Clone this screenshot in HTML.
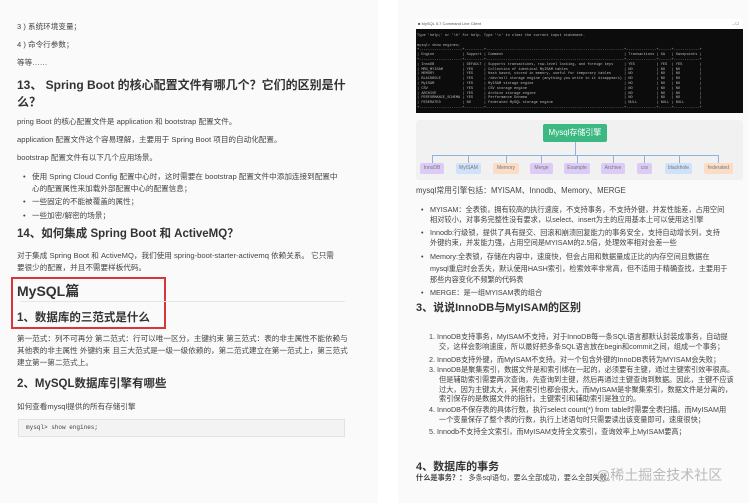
<!DOCTYPE html>
<html><head><meta charset="utf-8"><style>
*{margin:0;padding:0;box-sizing:border-box}
body{width:749px;height:503px;overflow:hidden;background:#fff;font-family:"Liberation Sans","Noto Sans CJK SC",sans-serif;color:#333;position:relative}
.l{position:absolute;font-size:7.6px;white-space:nowrap;line-height:10px;color:#444}
.r{font-size:7.2px}
.h{position:absolute;font-weight:bold;white-space:nowrap;color:#333}
.pg{position:absolute;background:#fafafa}
.b:before{content:"•";position:absolute;left:-9px}
.cb{position:absolute;top:163px;height:11px;font-size:5px;line-height:11px;text-align:center;border-radius:2px;color:#777}
.p{background:#dccbf6}.bl{background:#cfe2fb}.o{background:#fbdcc6}
.vl{position:absolute;top:155px;width:1px;height:8px;background:#8fb3de}
</style></head><body>
<div class="pg" style="left:0;top:0;width:378px;height:503px"></div>
<div class="pg" style="left:398px;top:0;width:351px;height:503px"></div>

<div class="l" style="left:17px;top:22px">3 ) 系统环境变量；</div>
<div class="l" style="left:17px;top:40px">4 ) 命令行参数；</div>
<div class="l" style="left:17px;top:58px">等等……</div>
<div class="h" style="left:17px;top:77px;font-size:12px;line-height:17px">13、 Spring Boot 的核心配置文件有哪几个？它们的区别是什<br>么？</div>
<div class="l" style="left:17px;top:117px">pring Boot 的核心配置文件是 application 和 bootstrap 配置文件。</div>
<div class="l" style="left:17px;top:135px">application 配置文件这个容易理解，主要用于 Spring Boot 项目的自动化配置。</div>
<div class="l" style="left:17px;top:153px">bootstrap 配置文件有以下几个应用场景。</div>
<div class="l b" style="left:32px;top:172px">使用 Spring Cloud Config 配置中心时，这时需要在 bootstrap 配置文件中添加连接到配置中</div>
<div class="l" style="left:32px;top:184px">心的配置属性来加载外部配置中心的配置信息；</div>
<div class="l b" style="left:32px;top:197px">一些固定的不能被覆盖的属性；</div>
<div class="l b" style="left:32px;top:211px">一些加密/解密的场景；</div>
<div class="h" style="left:17px;top:226px;font-size:11.5px;line-height:17px">14、如何集成 Spring Boot 和 ActiveMQ？</div>
<div class="l" style="left:17px;top:251px">对于集成 Spring Boot 和 ActiveMQ，我们使用 spring-boot-starter-activemq 依赖关系。 它只需</div>
<div class="l" style="left:17px;top:263px">要很少的配置，并且不需要样板代码。</div>
<div style="position:absolute;left:11px;top:277px;width:155px;height:52px;border:2px solid #d9363b"></div>
<div class="h" style="left:17px;top:281px;font-size:14px;line-height:20px">MySQL篇</div>
<div style="position:absolute;left:20px;top:301px;width:325px;height:1px;background:#e6e6e6"></div>
<div class="h" style="left:17px;top:310px;font-size:11.5px;line-height:17px">1、数据库的三范式是什么</div>
<div class="l" style="left:17px;top:334px">第一范式：列不可再分 第二范式：行可以唯一区分，主键约束 第三范式：表的非主属性不能依赖与</div>
<div class="l" style="left:17px;top:346px">其他表的非主属性 外键约束 且三大范式是一级一级依赖的，第二范式建立在第一范式上，第三范式</div>
<div class="l" style="left:17px;top:358px">建立第一第二范式上。</div>
<div class="h" style="left:17px;top:376px;font-size:11.5px;line-height:17px">2、MySQL数据库引擎有哪些</div>
<div class="l" style="left:17px;top:402px">如何查看mysql提供的所有存储引擎</div>
<div style="position:absolute;left:18px;top:419px;width:327px;height:18px;background:#f3f3f3;border:1px solid #e2e2e2;font-family:'Liberation Mono',monospace;font-size:6px;line-height:16px;padding-left:7px;color:#444">mysql&gt; show engines;</div>

<!-- terminal -->
<div style="position:absolute;left:416px;top:19px;width:327px;height:10px;background:#fff;font-size:4px;line-height:10px;color:#555;padding-left:2px">■ MySQL 5.7 Command Line Client<span style="position:absolute;right:4px">–  ☐</span></div>
<div style="position:absolute;left:416px;top:29px;width:327px;height:84px;background:#0c0c0c;color:#bbb;font-family:'Liberation Mono',monospace;font-size:3.6px;line-height:4.8px;padding:5px 1px;white-space:pre;overflow:hidden">Type 'help;' or '\h' for help. Type '\c' to clear the current input statement.

mysql> show engines;
+--------------------+---------+----------------------------------------------------------------+--------------+------+------------+
| Engine             | Support | Comment                                                        | Transactions | XA   | Savepoints |
+--------------------+---------+----------------------------------------------------------------+--------------+------+------------+
| InnoDB             | DEFAULT | Supports transactions, row-level locking, and foreign keys     | YES          | YES  | YES        |
| MRG_MYISAM         | YES     | Collection of identical MyISAM tables                          | NO           | NO   | NO         |
| MEMORY             | YES     | Hash based, stored in memory, useful for temporary tables      | NO           | NO   | NO         |
| BLACKHOLE          | YES     | /dev/null storage engine (anything you write to it disappears) | NO           | NO   | NO         |
| MyISAM             | YES     | MyISAM storage engine                                          | NO           | NO   | NO         |
| CSV                | YES     | CSV storage engine                                             | NO           | NO   | NO         |
| ARCHIVE            | YES     | Archive storage engine                                         | NO           | NO   | NO         |
| PERFORMANCE_SCHEMA | YES     | Performance Schema                                             | NO           | NO   | NO         |
| FEDERATED          | NO      | Federated MySQL storage engine                                 | NULL         | NULL | NULL       |
+--------------------+---------+----------------------------------------------------------------+--------------+------+------------+</div>

<!-- diagram -->
<div style="position:absolute;left:416px;top:120px;width:327px;height:60px;background:#f1f1f1;border-radius:3px"></div>
<div style="position:absolute;left:543px;top:124px;width:64px;height:18px;background:#3cb882;border-radius:2px;color:#fff;font-size:8px;line-height:18px;text-align:center">Mysql存储引擎</div>
<div style="position:absolute;left:575px;top:142px;width:1px;height:13px;background:#8fb3de"></div>
<div style="position:absolute;left:432px;top:155px;width:286px;height:1px;background:#8fb3de"></div>
<div class="vl" style="left:432px"></div><div class="vl" style="left:468px"></div><div class="vl" style="left:506px"></div><div class="vl" style="left:541px"></div><div class="vl" style="left:577px"></div><div class="vl" style="left:613px"></div><div class="vl" style="left:644px"></div><div class="vl" style="left:679px"></div><div class="vl" style="left:718px"></div>
<div class="cb p" style="left:420px;width:24px">InnoDB</div>
<div class="cb bl" style="left:456px;width:25px">MyISAM</div>
<div class="cb o" style="left:493px;width:26px">Memory</div>
<div class="cb p" style="left:530px;width:23px">Merge</div>
<div class="cb p" style="left:564px;width:26px">Example</div>
<div class="cb p" style="left:601px;width:24px">Archive</div>
<div class="cb p" style="left:637px;width:15px">csv</div>
<div class="cb bl" style="left:665px;width:27px">blackhole</div>
<div class="cb o" style="left:704px;width:29px">federated</div>

<div class="l" style="left:416px;top:186px;font-size:7.8px">mysql常用引擎包括：MYISAM、Innodb、Memory、MERGE</div>
<div class="l r b" style="left:430px;top:205px">MYISAM：全表锁，拥有较高的执行速度，不支持事务，不支持外键，并发性能差，占用空间</div>
<div class="l r" style="left:430px;top:215px">相对较小，对事务完整性没有要求，以select、insert为主的应用基本上可以使用这引擎</div>
<div class="l r b" style="left:430px;top:228px">Innodb:行级锁，提供了具有提交、回滚和崩溃回复能力的事务安全，支持自动增长列，支持</div>
<div class="l r" style="left:430px;top:238px">外键约束，并发能力强，占用空间是MYISAM的2.5倍，处理效率相对会差一些</div>
<div class="l r b" style="left:430px;top:252px">Memory:全表锁，存储在内容中，速度快，但会占用和数据量成正比的内存空间且数据在</div>
<div class="l r" style="left:430px;top:264px">mysql重启时会丢失，默认使用HASH索引，检索效率非常高，但不适用于精确查找，主要用于</div>
<div class="l r" style="left:430px;top:275px">那些内容变化不频繁的代码表</div>
<div class="l r b" style="left:430px;top:288px">MERGE：是一组MYISAM表的组合</div>
<div class="h" style="left:416px;top:300px;font-size:11px;line-height:16px">3、说说InnoDB与MyISAM的区别</div>
<div class="l r" style="left:429px;top:332px">1. InnoDB支持事务，MyISAM不支持，对于InnoDB每一条SQL语言都默认封装成事务，自动提</div>
<div class="l r" style="left:439px;top:342px">交，这样会影响速度，所以最好把多条SQL语言放在begin和commit之间，组成一个事务；</div>
<div class="l r" style="left:429px;top:355px">2. InnoDB支持外键，而MyISAM不支持。对一个包含外键的InnoDB表转为MYISAM会失败；</div>
<div class="l r" style="left:429px;top:365px">3. InnoDB是聚集索引，数据文件是和索引绑在一起的，必须要有主键，通过主键索引效率很高。</div>
<div class="l r" style="left:439px;top:375px">但是辅助索引需要两次查询，先查询到主键，然后再通过主键查询到数据。因此，主键不应该</div>
<div class="l r" style="left:439px;top:385px">过大，因为主键太大，其他索引也都会很大。而MyISAM是非聚集索引，数据文件是分离的，</div>
<div class="l r" style="left:439px;top:394px">索引保存的是数据文件的指针。主键索引和辅助索引是独立的。</div>
<div class="l r" style="left:429px;top:405px">4. InnoDB不保存表的具体行数，执行select count(*) from table时需要全表扫描。而MyISAM用</div>
<div class="l r" style="left:439px;top:415px">一个变量保存了整个表的行数，执行上述语句时只需要读出该变量即可，速度很快；</div>
<div class="l r" style="left:429px;top:427px">5. Innodb不支持全文索引，而MyISAM支持全文索引，查询效率上MyISAM要高；</div>
<div class="h" style="left:416px;top:459px;font-size:11px;line-height:16px">4、数据库的事务</div>
<div class="l r" style="left:416px;top:473px"><b>什么是事务？：</b> 多条sql语句，要么全部成功，要么全部失败。</div>
<div style="position:absolute;left:596px;top:465px;font-size:14px;color:rgba(170,170,170,.8);white-space:nowrap">@稀土掘金技术社区</div>
</body></html>
